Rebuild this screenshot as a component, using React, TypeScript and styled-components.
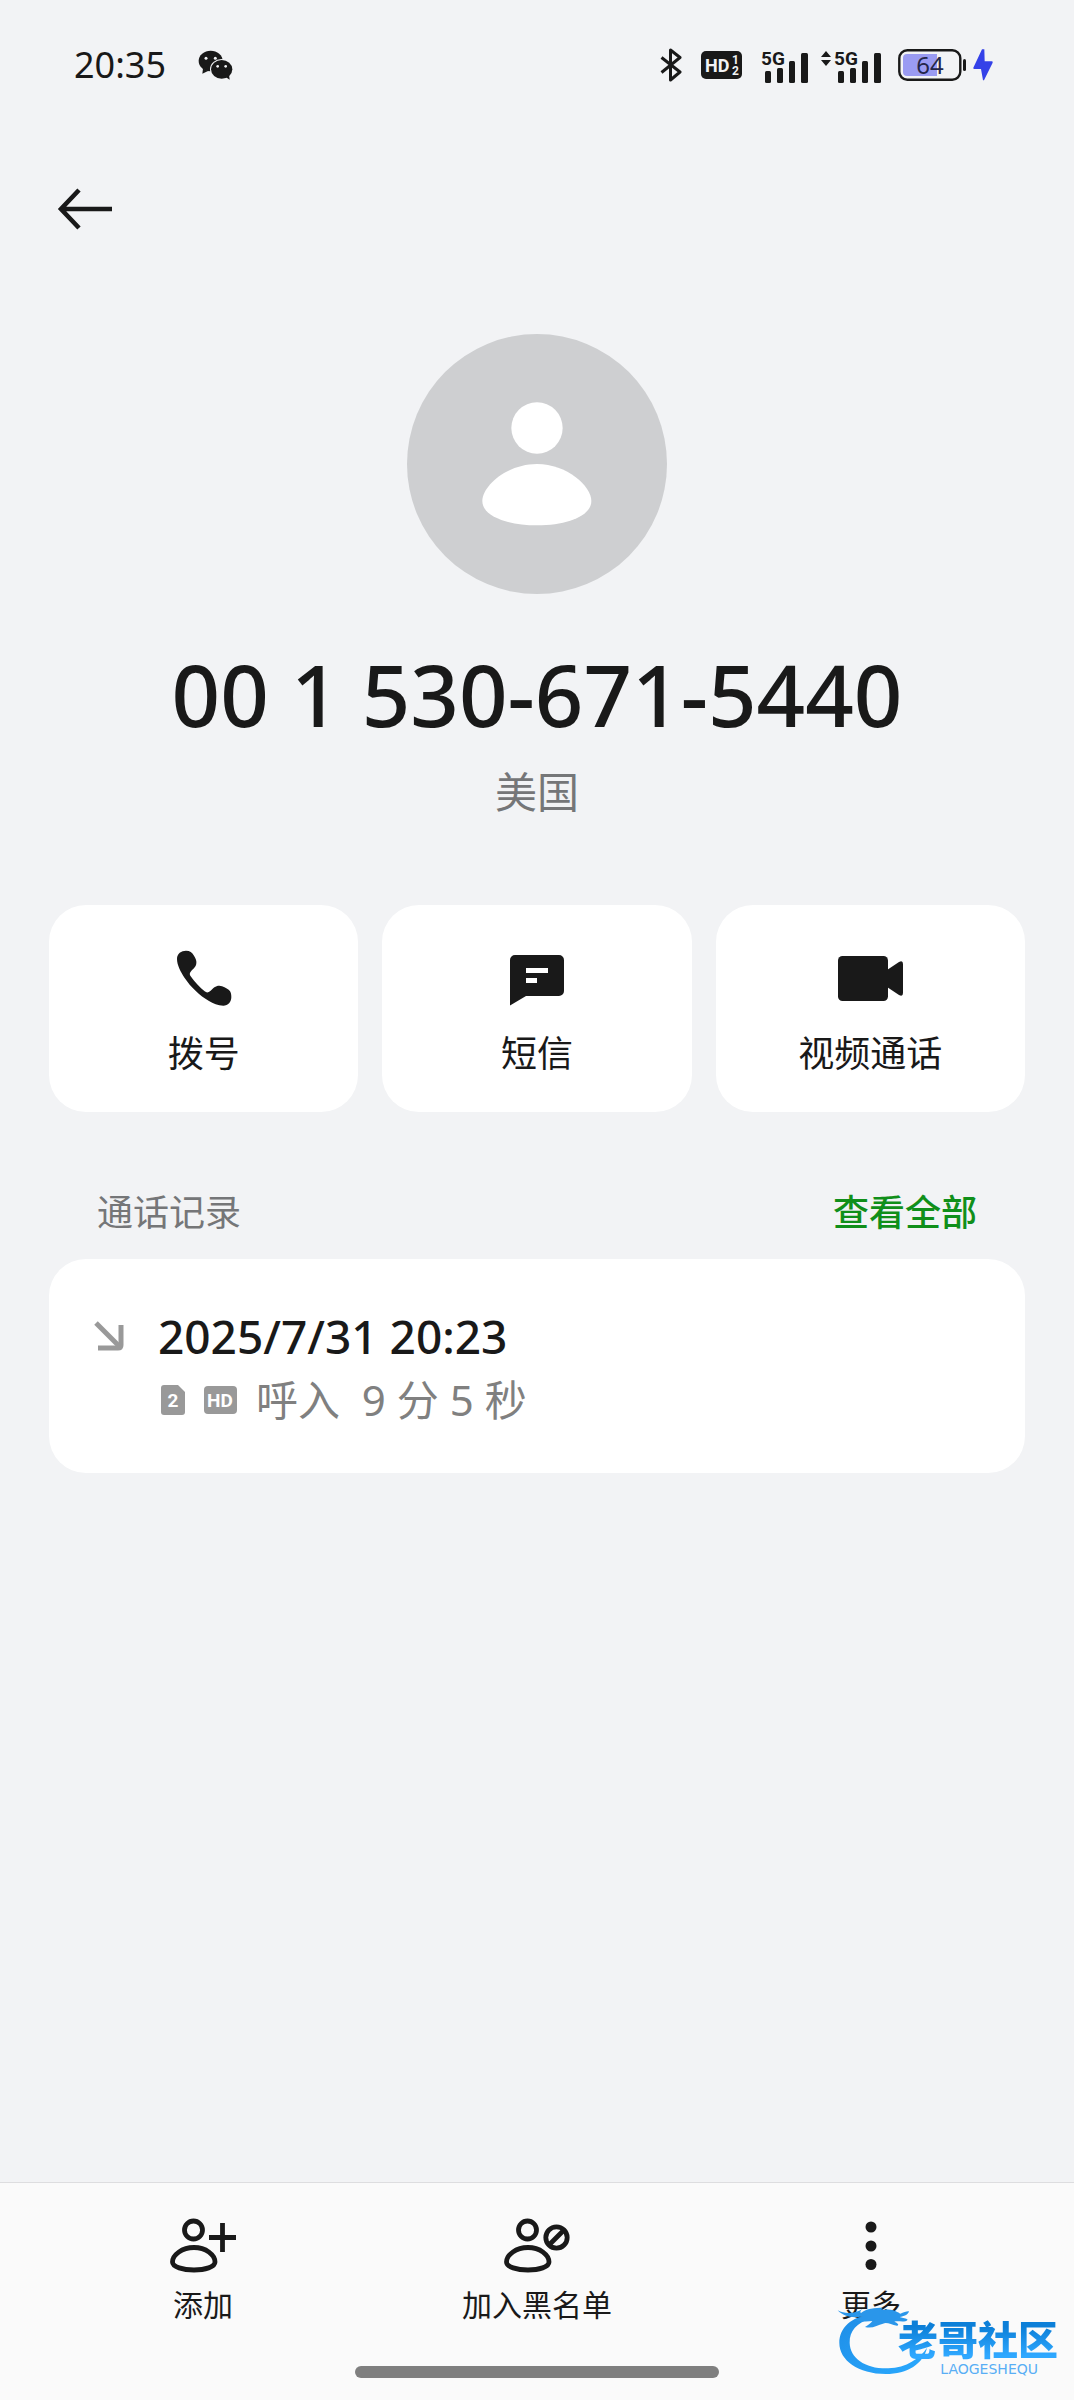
import React from "react";
import styled, { createGlobalStyle } from "styled-components";

const color = {
  page: "#f2f3f5",
  card: "#ffffff",
  ink: "#191919",
  muted: "#757678",
  faint: "#999999",
  accent: "#108f1a",
};

const badgeFont = "Roboto, sans-serif";

const GlobalStyle = createGlobalStyle`
  * { box-sizing: border-box; }
  body {
    margin: 0;
    background: ${color.page};
    color: ${color.ink};
    font-family: "Noto Sans", "Noto Sans CJK SC", sans-serif;
  }
  button {
    margin: 0;
    padding: 0;
    border: 0;
    background: none;
    color: inherit;
    font: inherit;
    cursor: pointer;
  }
  svg { display: block; flex: none; }
`;

const Screen = styled.div`
  position: relative;
  display: flex;
  flex-direction: column;
  min-height: 100vh;
`;

const StatusBar = styled.header`
  display: flex;
  align-items: center;
  justify-content: space-between;
  height: 130px;
  padding: 0 81px 0 74px;
`;

const StatusGroup = styled.div<{ $gap: number }>`
  display: flex;
  align-items: center;
  gap: ${(p) => p.$gap}px;
`;

const Clock = styled.time`
  font-size: 36px;
  line-height: 48px;
`;

const Toolbar = styled.div`
  display: flex;
  align-items: center;
  height: 158px;
  padding: 0 56px;
`;

const BackButton = styled.button`
  display: flex;
`;

const Main = styled.main`
  display: flex;
  flex-direction: column;
  padding: 46px 49px;
`;

const Profile = styled.section`
  display: flex;
  flex-direction: column;
  align-items: center;
`;

const Avatar = styled.div`
  display: flex;
  align-items: center;
  justify-content: center;
  width: 260px;
  height: 260px;
  border-radius: 50%;
  background: #cecfd1;
`;

const PhoneNumber = styled.h1`
  margin: 48px 0 18px;
  font-size: 85px;
  font-weight: 500;
  line-height: 104px;
  white-space: nowrap;
`;

const Region = styled.p`
  margin: 0;
  color: ${color.muted};
  font-size: 42px;
  line-height: 56px;
`;

const Actions = styled.div`
  display: grid;
  grid-template-columns: repeat(3, 1fr);
  gap: 24px;
  margin-top: 85px;
`;

const ActionCard = styled.button`
  display: flex;
  flex-direction: column;
  align-items: center;
  gap: 24px;
  padding: 45px 0 34px;
  border-radius: 37px;
  background: ${color.card};
  font-size: 36px;
  line-height: 48px;
`;

const SectionHead = styled.div`
  display: flex;
  justify-content: space-between;
  margin: 77px 0 22px;
  padding: 0 48px;
  font-size: 36px;
  line-height: 48px;
`;

const SectionTitle = styled.h2`
  margin: 0;
  color: ${color.muted};
  font-size: inherit;
  font-weight: 400;
`;

const ViewAll = styled.a`
  color: ${color.accent};
  font-weight: 500;
  text-decoration: none;
`;

const LogCard = styled.article`
  display: flex;
  gap: 34px;
  padding: 47px 45px 45px;
  border-radius: 37px;
  background: ${color.card};
`;

const Direction = styled.div`
  display: flex;
  align-items: center;
  height: 60px;
`;

const LogBody = styled.div`
  display: flex;
  flex-direction: column;
  gap: 6px;
`;

const LogTime = styled.time`
  font-size: 46px;
  font-weight: 500;
  line-height: 60px;
`;

const LogDetail = styled.div`
  display: flex;
  align-items: center;
  gap: 19px;
  padding-left: 3px;
  color: #808080;
  font-size: 42px;
  line-height: 56px;
  white-space: pre;
`;

const BottomBar = styled.nav`
  display: flex;
  flex-direction: column;
  align-items: center;
  margin-top: auto;
  padding: 35px 36px 22px;
  border-top: 1px solid #dddddf;
  background: #fafafa;
`;

const Tabs = styled.div`
  display: grid;
  grid-template-columns: repeat(3, 1fr);
  width: 100%;
`;

const Tab = styled.button`
  display: flex;
  flex-direction: column;
  align-items: center;
  gap: 10px;
  font-size: 30px;
  line-height: 42px;
`;

const HomeIndicator = styled.div`
  width: 364px;
  height: 12px;
  margin-top: 40px;
  border-radius: 6px;
  background: #7f7f7f;
`;

const Watermark = styled.div`
  position: absolute;
  right: 16px;
  bottom: 24px;
  display: flex;
  pointer-events: none;
`;

const WatermarkWords = styled.div`
  display: flex;
  flex-direction: column;
  align-items: flex-end;
  margin: 12px 0 0 -31px;
`;

const WatermarkName = styled.span`
  background: linear-gradient(#0c7fd8 20%, #2fa8ff 85%);
  background-clip: text;
  color: transparent;
  font-size: 40px;
  font-weight: 900;
  line-height: 44px;
`;

const WatermarkLatin = styled.span`
  padding-right: 20px;
  color: #58aef5;
  font-family: "DejaVu Sans", sans-serif;
  font-size: 14px;
  line-height: 14px;
`;

const WeChatIcon = () => (
  <svg width="35" height="30" viewBox="473 57 105 90" fill={color.ink}>
    <path d="M488 112l-2 16 17-8z" />
    <ellipse cx="511" cy="90" rx="36" ry="31" />
    <ellipse cx="544" cy="115" rx="35" ry="31" fill={color.page} />
    <path d="M556 138l12 8-2-15z" />
    <ellipse cx="544" cy="115" rx="32" ry="28" />
    <g fill={color.page}>
      <circle cx="497" cy="82" r="4.5" />
      <circle cx="525" cy="82" r="4.5" />
      <circle cx="532" cy="106" r="4" />
      <circle cx="556" cy="106" r="4" />
    </g>
  </svg>
);

const BluetoothIcon = () => (
  <svg width="22" height="34" viewBox="0 0 22 34" fill="none" stroke={color.ink} strokeWidth="3" strokeLinejoin="round">
    <path d="M1.500 9.500 20 24l-9.500 8V2L20 9.500 1.500 24.500" />
  </svg>
);

const HdBadge = () => (
  <svg width="41" height="28" viewBox="0 0 41 28" fontFamily={badgeFont} fontWeight="700" fill={color.page}>
    <rect width="41" height="28" rx="5" fill={color.ink} />
    <text x="4" y="21" fontSize="18">HD</text>
    <text x="31" y="13" fontSize="12">1</text>
    <text x="31" y="24" fontSize="12">2</text>
  </svg>
);

const SignalIcon = ({ transfer = false }: { transfer?: boolean }) => {
  const left = transfer ? 13 : 0;
  return (
    <svg width={48 + left} height="38" viewBox={`${-left} -4 ${48 + left} 38`} overflow="visible" fill={color.ink}>
      {transfer && <path d="M-13 7l5-6 5 6zM-13 10h10l-5 6z" />}
      <text x="0" y="15" fontSize="19" fontWeight="700" fontFamily={badgeFont}>5G</text>
      <rect x="4" y="21" width="6" height="12" rx="1.500" />
      <rect x="16" y="18" width="6" height="15" rx="1.500" />
      <rect x="28" y="11" width="6" height="22" rx="1.500" />
      <rect x="40" y="3" width="7" height="30" rx="1.500" />
    </svg>
  );
};

const BatteryIcon = () => (
  <svg width="68" height="32" viewBox="0 0 68 32">
    <path d="M9 5h30v22H9a4 4 0 0 1-4-4V9a4 4 0 0 1 4-4z" fill="#9a9bf2" />
    <rect x="1.300" y="1.300" width="61" height="29.400" rx="8" fill="none" stroke={color.ink} strokeWidth="2.400" />
    <rect x="65" y="10" width="3" height="12" rx="1.500" fill={color.ink} />
    <text x="32" y="25" fontSize="24" textAnchor="middle" fontFamily="Noto Sans, sans-serif" fill="#24264a">64</text>
  </svg>
);

const BoltIcon = () => (
  <svg width="20" height="32" viewBox="1002 54 60 96" fill="#3441e8">
    <path d="M1029 55 1003 110q-1 4 3 4h20l6 34h3l26-53q1-4-3-4h-21l-1-36z" />
  </svg>
);

const BackIcon = () => (
  <svg width="56" height="42" viewBox="0 0 56 42" fill="none" stroke={color.ink} strokeWidth="4.600">
    <path d="M23 2 5 21l18 19M5 21h51" />
  </svg>
);

const AvatarIcon = () => (
  <svg width="110" height="124" viewBox="305 278 330 372" fill="#fff">
    <circle cx="470" cy="356" r="77" />
    <path d="M306 575C306 530 380 464 470 464S633 530 633 575C633 620 560 648 470 648S306 620 306 575Z" />
  </svg>
);

const DialIcon = () => (
  <svg width="56" height="56" viewBox="434 180 168 168" fill={color.ink}>
    <path d="M437 207C437 190 450 182 464 182C476 182 482 187 488 197C494 207 496 213 495 220C494 232 484 238 478 245C474 250 475 254 478 259C490 277 506 293 520 304C526 309 531 308 537 303C546 294 552 287 564 287C575 287 585 294 592 299C599 305 600 312 600 321C600 336 590 347 576 347C560 347 545 340 533 333C505 317 478 291 460 264C448 246 437 225 437 207Z" />
  </svg>
);

const MessageIcon = () => (
  <svg width="54" height="56" viewBox="0 0 54 56" fill={color.ink}>
    <path d="M5 5h44a5 5 0 0 1 5 5v31a5 5 0 0 1-5 5H16L0 55.500V10a5 5 0 0 1 5-5z" />
    <path d="M16 18h22v5H16zM16 28h11v5H16z" fill="#fff" />
  </svg>
);

const VideoIcon = () => (
  <svg width="65" height="56" viewBox="0 0 65 56" fill={color.ink}>
    <rect y="6" width="50" height="45" rx="4.500" />
    <path d="M49 20l12-8q4-2 4 2v29q0 4-4 2l-12-8z" />
  </svg>
);

const IncomingIcon = () => (
  <svg width="30" height="30" viewBox="0 0 30 30" fill="none" stroke={color.faint} strokeWidth="5">
    <path d="M2 2l24 24" />
    <path d="M4 27h20q3 0 3-3V4" />
  </svg>
);

const SimIcon = () => (
  <svg width="24" height="30" viewBox="0 0 24 30">
    <path d="M3 0h14l7 7v20a3 3 0 0 1-3 3H3a3 3 0 0 1-3-3V3a3 3 0 0 1 3-3z" fill={color.faint} />
    <text x="12" y="22" fontSize="19" fontWeight="700" textAnchor="middle" fontFamily={badgeFont} fill="#fff">2</text>
  </svg>
);

const CallHdIcon = () => (
  <svg width="33" height="30" viewBox="0 0 33 30">
    <rect y="1" width="33" height="28" rx="4" fill={color.faint} />
    <text x="16" y="22" fontSize="19" fontWeight="700" textAnchor="middle" fontFamily={badgeFont} fill="#fff">HD</text>
  </svg>
);

const PersonOutline = () => (
  <>
    <circle cx="23.500" cy="12" r="9" />
    <path d="M2.500 44C2.500 37 12 29.500 24 29.500S45 37 45 44C45 49 35 52 24 52S2.500 49 2.500 44Z" />
  </>
);

const AddPersonIcon = () => (
  <svg width="66" height="56" viewBox="0 0 66 56" fill="none" stroke={color.ink} strokeWidth="4.800">
    <PersonOutline />
    <path d="M39 19.500h27M52.500 5v29" />
  </svg>
);

const BlockPersonIcon = () => (
  <svg width="66" height="56" viewBox="0 0 66 56" fill="none" stroke={color.ink} strokeWidth="4.800">
    <PersonOutline />
    <circle cx="52.500" cy="19.500" r="10.700" />
    <path d="M45.500 26.500l14-14" />
  </svg>
);

const MoreIcon = () => (
  <svg width="12" height="56" viewBox="0 0 12 56" fill={color.ink}>
    <circle cx="6" cy="9" r="5.500" />
    <circle cx="6" cy="28" r="5.500" />
    <circle cx="6" cy="46.500" r="5.500" />
  </svg>
);

const DragonSwirl = () => (
  <svg width="92" height="70" viewBox="286 405 276 210">
    <defs>
      <linearGradient id="swirl" x1="0" y1="0" x2="1" y2="1">
        <stop offset="0" stopColor="#1e8de6" />
        <stop offset="1" stopColor="#2aaaff" />
      </linearGradient>
    </defs>
    <path
      fill="url(#swirl)"
      d="M386 432C330 436 293 470 293 516C293 568 350 609 432 609C498 609 545 578 556 530C535 562 494 590 440 592C372 594 325 562 324 515C323 480 346 455 386 444Z"
    />
    <path
      fill="#2a96ea"
      d="M288 418C310 430 340 428 362 414C356 420 354 424 358 426C374 412 400 410 424 410C416 415 420 417 430 416C452 412 470 424 476 428C486 424 496 420 502 421C500 432 486 436 474 438C484 442 494 442 498 446C490 456 470 448 458 452C468 456 474 462 466 464C448 462 436 452 424 458C408 462 392 474 370 468C380 462 388 456 392 450C376 452 352 452 338 446C350 444 360 440 362 436C336 442 306 438 288 418Z"
    />
  </svg>
);

const actions = [
  { label: "拨号", Icon: DialIcon },
  { label: "短信", Icon: MessageIcon },
  { label: "视频通话", Icon: VideoIcon },
];

const tabs = [
  { label: "添加", Icon: AddPersonIcon },
  { label: "加入黑名单", Icon: BlockPersonIcon },
  { label: "更多", Icon: MoreIcon },
];

export default function App() {
  return (
    <>
      <GlobalStyle />
      <Screen>
        <StatusBar>
          <StatusGroup $gap={32}>
            <Clock>20:35</Clock>
            <WeChatIcon />
          </StatusGroup>
          <StatusGroup $gap={16}>
            <StatusGroup $gap={19}>
              <BluetoothIcon />
              <HdBadge />
              <StatusGroup $gap={12}>
                <SignalIcon />
                <SignalIcon transfer />
              </StatusGroup>
            </StatusGroup>
            <StatusGroup $gap={7}>
              <BatteryIcon />
              <BoltIcon />
            </StatusGroup>
          </StatusGroup>
        </StatusBar>

        <Toolbar>
          <BackButton type="button" aria-label="返回">
            <BackIcon />
          </BackButton>
        </Toolbar>

        <Main>
          <Profile>
            <Avatar>
              <AvatarIcon />
            </Avatar>
            <PhoneNumber>00 1 530-671-5440</PhoneNumber>
            <Region>美国</Region>
          </Profile>

          <Actions>
            {actions.map(({ label, Icon }) => (
              <ActionCard key={label} type="button">
                <Icon />
                {label}
              </ActionCard>
            ))}
          </Actions>

          <SectionHead>
            <SectionTitle>通话记录</SectionTitle>
            <ViewAll href="#all">查看全部</ViewAll>
          </SectionHead>

          <LogCard>
            <Direction>
              <IncomingIcon />
            </Direction>
            <LogBody>
              <LogTime>2025/7/31 20:23</LogTime>
              <LogDetail>
                <SimIcon />
                <CallHdIcon />
                <span>呼入  9 分 5 秒</span>
              </LogDetail>
            </LogBody>
          </LogCard>
        </Main>

        <BottomBar>
          <Tabs>
            {tabs.map(({ label, Icon }) => (
              <Tab key={label} type="button">
                <Icon />
                {label}
              </Tab>
            ))}
          </Tabs>
          <HomeIndicator />
        </BottomBar>

        <Watermark>
          <DragonSwirl />
          <WatermarkWords>
            <WatermarkName>老哥社区</WatermarkName>
            <WatermarkLatin>LAOGESHEQU</WatermarkLatin>
          </WatermarkWords>
        </Watermark>
      </Screen>
    </>
  );
}
